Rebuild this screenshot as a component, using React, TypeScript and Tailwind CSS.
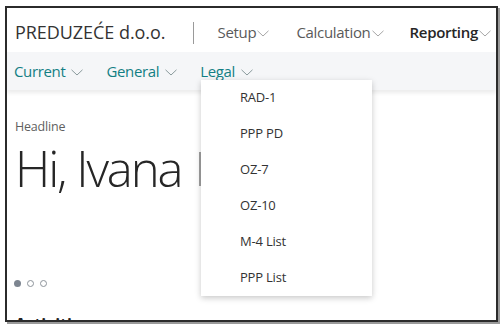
import React from 'react'

const font = { fontFamily: '"Segoe UI", "Open Sans", "Noto Sans", sans-serif' }

function Chevron({ className = '' }: { className?: string }) {
  return (
    <svg width="12" height="7" viewBox="0 0 12 7" className={className} fill="none">
      <path d="M0.5 0.8 L6 6 L11.5 0.8" stroke="currentColor" strokeWidth="1" />
    </svg>
  )
}

const topMenu = [
  { label: 'Setup', bold: false },
  { label: 'Calculation', bold: false },
  { label: 'Reporting', bold: true },
]

const subMenu = ['Current', 'General', 'Legal']

const legalItems = ['RAD-1', 'PPP PD', 'OZ-7', 'OZ-10', 'M-4 List', 'PPP List']

export default function App() {
  return (
    <div className="w-[503px] h-[326px] bg-white pl-[5px] pt-[6px]" style={font}>
      <div className="relative w-[493px] h-[316px] border-2 border-[#2b2b2b] shadow-[2px_2px_0_#9a9a9a] overflow-hidden bg-white">
        {/* header */}
        <div className="flex items-center h-[44px] pt-[5px] pl-[8px]">
          <span className="text-[18px] text-[#333] tracking-[-0.05px]">PREDUZEĆE d.o.o.</span>
          <div className="w-px h-[22px] bg-[#9a9a9a] ml-[27px] mr-[24px]" />
          <div className="flex items-center">
            {topMenu.map((m, i) => (
              <div key={m.label} className={`flex items-center ${i === 1 ? 'ml-[27px]' : i === 2 ? 'ml-[26px]' : ''}`}>
                <span className={`text-[15px] tracking-[-0.3px] ${m.bold ? 'font-semibold text-[#262626]' : 'text-[#5a5a5a]'}`}>{m.label}</span>
                <Chevron className="text-[#a6a6a6] ml-[1px] mt-[2px]" />
              </div>
            ))}
          </div>
        </div>

        {/* sub nav */}
        <div className="flex items-center h-[38px] bg-[#f5f6f8] pl-[7px] shadow-[0_3px_4px_rgba(0,0,0,0.08)]">
          {subMenu.map((s, i) => (
            <div key={s} className={`flex items-center ${i > 0 ? 'ml-[23px]' : ''}`}>
              <span className="text-[15px] tracking-[-0.35px] text-[#137f84]">{s}</span>
              <Chevron className="text-[#8a9a9c] ml-[6px] mt-[2px]" />
            </div>
          ))}
        </div>

        {/* content */}
        <div className="pl-[8px] pt-[28px]">
          <div className="text-[12.5px] text-[#5f5f5f] tracking-[-0.2px]">Headline</div>
          <div className="flex items-center mt-[1px]">
            <span className="text-[49px] font-light text-[#262626] leading-[60px] tracking-[-2.1px]">Hi, Ivana</span>
            <div className="w-[2px] h-[34px] bg-[#a0a0a0] ml-[18px] mt-[3px]" />
          </div>
          <div className="flex items-center gap-[6px] mt-[82px]">
            <span className="w-[7px] h-[7px] rounded-full bg-[#7d8590] -ml-[1px]" />
            <span className="w-[7px] h-[7px] rounded-full border border-[#8d939a]" />
            <span className="w-[7px] h-[7px] rounded-full border border-[#8d939a]" />
          </div>
          <div className="text-[16px] font-bold text-[#222] mt-[27px] leading-[20px]">Activities</div>
        </div>

        {/* legal dropdown */}
        <div className="absolute left-[194px] top-[72px] w-[171px] bg-white shadow-[0_2px_6px_rgba(0,0,0,0.22)]">
          {legalItems.map((item) => (
            <div key={item} className="h-[36px] flex items-center pl-[39px] text-[13px] text-[#333] tracking-[-0.2px]">
              {item}
            </div>
          ))}
        </div>
      </div>
    </div>
  )
}
